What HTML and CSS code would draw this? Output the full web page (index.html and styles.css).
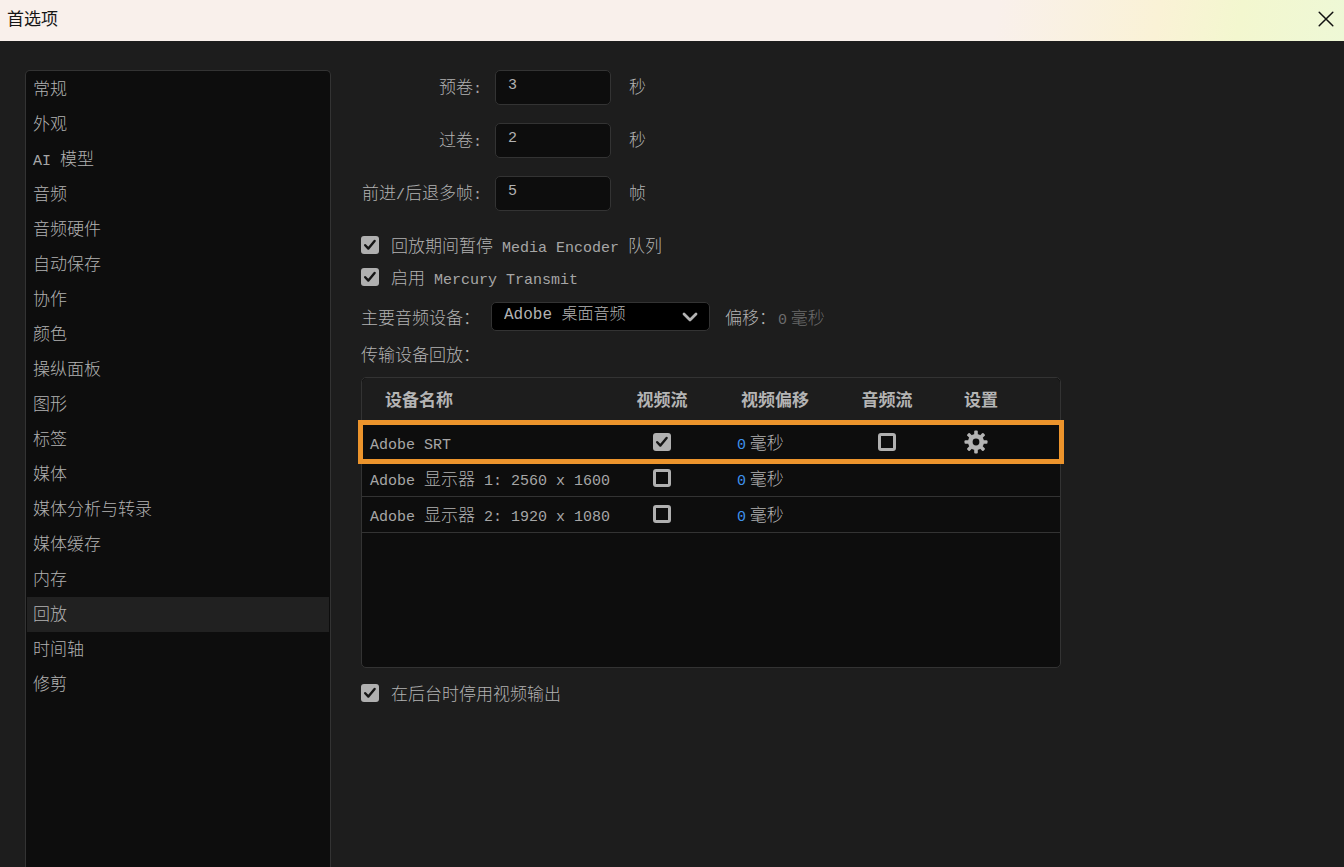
FILE: index.html
```html
<!DOCTYPE html>
<html lang="zh-CN">
<head>
<meta charset="utf-8">
<meta name="viewport" content="width=device-width, initial-scale=1">
<title>首选项</title>
<link rel="stylesheet" href="styles.css">
</head>
<body>
<header class="titlebar">
  <h1 class="title">首选项</h1>
  <button class="close" type="button" aria-label="关闭">
    <svg width="16" height="16" viewBox="0 0 16 16" fill="none" stroke="#111" stroke-width="1.5" stroke-linecap="round"><path d="M1.2 1.2 14.8 14.8M14.8 1.2 1.2 14.8"/></svg>
  </button>
</header>
<div class="layout">
  <nav class="sidebar">
    <button type="button" class="nav-item">常规</button>
    <button type="button" class="nav-item">外观</button>
    <button type="button" class="nav-item"><span class="latin">AI </span>模型</button>
    <button type="button" class="nav-item">音频</button>
    <button type="button" class="nav-item">音频硬件</button>
    <button type="button" class="nav-item">自动保存</button>
    <button type="button" class="nav-item">协作</button>
    <button type="button" class="nav-item">颜色</button>
    <button type="button" class="nav-item">操纵面板</button>
    <button type="button" class="nav-item">图形</button>
    <button type="button" class="nav-item">标签</button>
    <button type="button" class="nav-item">媒体</button>
    <button type="button" class="nav-item">媒体分析与转录</button>
    <button type="button" class="nav-item">媒体缓存</button>
    <button type="button" class="nav-item">内存</button>
    <button type="button" class="nav-item active" aria-current="page">回放</button>
    <button type="button" class="nav-item">时间轴</button>
    <button type="button" class="nav-item">修剪</button>
  </nav>
  <main class="panel">
    <div class="fields">
      <label for="preroll">预卷<span class="latin">:</span></label><input class="number" id="preroll" type="text" value="3"><span class="unit">秒</span>
      <label for="postroll">过卷<span class="latin">:</span></label><input class="number" id="postroll" type="text" value="2"><span class="unit">秒</span>
      <label for="step">前进<span class="latin">/</span>后退多帧<span class="latin">:</span></label><input class="number" id="step" type="text" value="5"><span class="unit">帧</span>
    </div>
    <div class="checks">
      <label class="check-row"><input class="check" type="checkbox" checked><span>回放期间暂停<span class="latin"> Media Encoder </span>队列</span></label>
      <label class="check-row"><input class="check" type="checkbox" checked><span>启用<span class="latin"> Mercury Transmit</span></span></label>
    </div>
    <div class="device">
      <label class="device-label" for="audio">主要音频设备：</label>
      <div class="select-wrap">
        <select id="audio" class="select"><option>Adobe 桌面音频</option></select>
        <svg class="chevron" width="16" height="10" viewBox="0 0 16 10" fill="none" stroke="#b4b4b4" stroke-width="2.8" stroke-linecap="round" stroke-linejoin="round"><path d="M2 2 8 8 14 2"/></svg>
      </div>
      <span class="offset-label">偏移：</span>
      <span class="muted"><span class="latin">0</span> 毫秒</span>
    </div>
    <h2 class="caption" id="transmit">传输设备回放：</h2>
    <div class="table-box">
      <table class="devices" aria-labelledby="transmit">
        <colgroup><col class="c-name"><col class="c-video"><col class="c-offset"><col class="c-audio"><col></colgroup>
        <thead>
          <tr><th class="name">设备名称</th><th>视频流</th><th>视频偏移</th><th>音频流</th><th class="settings">设置</th></tr>
        </thead>
        <tbody>
          <tr class="highlight">
            <td class="name"><span class="latin">Adobe SRT</span></td>
            <td><input class="check" type="checkbox" checked aria-label="视频流"></td>
            <td class="offset"><button class="value" type="button">0</button> 毫秒</td>
            <td><input class="check" type="checkbox" aria-label="音频流"></td>
            <td class="settings"><button class="gear" type="button" aria-label="设置"><svg width="24" height="24" viewBox="-12 -12 24 24"><g fill="#b4b4b4"><g id="teeth"><rect x="-1.8" y="-11.5" width="3.6" height="23" rx="1"/><rect x="-11.5" y="-1.8" width="23" height="3.6" rx="1"/></g><use href="#teeth" transform="rotate(45)"/><circle r="8"/></g><circle r="3.4" fill="#0d0d0d"/></svg></button></td>
          </tr>
          <tr>
            <td class="name"><span class="latin">Adobe </span>显示器<span class="latin"> 1: 2560 x 1600</span></td>
            <td><input class="check" type="checkbox" aria-label="视频流"></td>
            <td class="offset"><button class="value" type="button">0</button> 毫秒</td>
            <td></td><td></td>
          </tr>
          <tr>
            <td class="name"><span class="latin">Adobe </span>显示器<span class="latin"> 2: 1920 x 1080</span></td>
            <td><input class="check" type="checkbox" aria-label="视频流"></td>
            <td class="offset"><button class="value" type="button">0</button> 毫秒</td>
            <td></td><td></td>
          </tr>
        </tbody>
      </table>
    </div>
    <label class="check-row"><input class="check" type="checkbox" checked><span>在后台时停用视频输出</span></label>
  </main>
</div>
</body>
</html>
```
FILE: styles.css
```css
* { box-sizing: border-box; }

body {
  margin: 0;
  min-height: 100vh;
  display: flex;
  flex-direction: column;
  background: #1d1d1d;
  color: #b2b2b2;
  font: 300 17px/24px "Noto Sans CJK SC", sans-serif;
}

button, input, select { font: inherit; color: inherit; }
button { border: 0; padding: 0; background: none; }

.latin { font: 15px/1 "Liberation Mono", monospace; white-space: pre; color: #a6a6a6; }

.titlebar {
  height: 41px;
  padding: 0 10px 3px 7px;
  display: flex;
  align-items: center;
  justify-content: space-between;
  background: linear-gradient(100deg, #f9f0eb 74%, #faf2d6 86%, #f3f7cf 92%, #eef8d6);
  color: #161616;
}
.title { margin: 0; padding-bottom: 2px; font-size: 17px; font-weight: 400; }
.close { display: flex; }

.layout {
  flex: 1;
  display: flex;
  gap: 30px;
  padding: 29px 25px 0;
}

.sidebar {
  flex: 0 0 306px;
  display: flex;
  flex-direction: column;
  padding: 1px;
  border: 1px solid #333;
  border-bottom: 0;
  border-radius: 5px 5px 0 0;
  background: #0d0d0d;
}
.nav-item { height: 35px; padding: 0 0 3px 6px; text-align: left; }
.nav-item.active { background: #212121; }

.panel { flex: 1; min-width: 0; }

.fields {
  display: grid;
  grid-template-columns: 121px 116px auto;
  gap: 18px 13px;
  align-items: center;
}
.fields label { padding-bottom: 3px; text-align: right; white-space: nowrap; }
.unit { padding: 0 0 3px 5px; }
.number {
  width: 100%;
  height: 35px;
  padding: 0 12px 4px;
  border: 1px solid #333;
  border-radius: 5px;
  background: #0d0d0d;
  font: 15px "Liberation Mono", monospace;
}

.checks { display: grid; gap: 8px; margin: 22px 0 13px; }
.check-row { display: flex; align-items: center; gap: 12px; }
.check {
  appearance: none;
  display: block;
  width: 18px;
  height: 18px;
  margin: 0;
  border: 3px solid #b0b0b0;
  border-radius: 3px;
}
.check:checked {
  border: 0;
  background: #b0b0b0 url("data:image/svg+xml,%3Csvg xmlns='http://www.w3.org/2000/svg' viewBox='0 0 18 18'%3E%3Cpath d='M4.2 9.2 7.4 12.6 13.6 5' fill='none' stroke='%23151515' stroke-width='2.4' stroke-linecap='round' stroke-linejoin='round'/%3E%3C/svg%3E");
}

.device { display: flex; align-items: center; }
.device-label { width: 130px; white-space: nowrap; }
.select-wrap { position: relative; width: 219px; }
.select {
  display: block;
  appearance: none;
  width: 100%;
  height: 29px;
  padding: 0 32px 4px 12px;
  border: 1px solid #333;
  border-radius: 5px;
  background: #000;
  font: 300 16px "Liberation Mono", "Noto Sans CJK SC", monospace;
}
.chevron { position: absolute; right: 12px; top: 10px; pointer-events: none; }
.offset-label { padding-left: 15px; }
.muted, .muted .latin { color: #6c6c6c; }
.muted { padding-left: 2px; }

.caption { margin: 11px 0; font-size: 17px; font-weight: 300; }

.table-box {
  max-width: 700px;
  min-height: 291px;
  margin-bottom: 13px;
  border: 1px solid #333;
  border-radius: 5px;
  background: #0d0d0d;
}
.devices { width: 100%; table-layout: fixed; border-collapse: collapse; }
.c-name { width: 250px; }
.c-video { width: 100px; }
.c-offset { width: 126px; }
.c-audio { width: 98px; }
.devices th {
  height: 46px;
  padding: 0 0 4px;
  background: #1d1d1d;
  color: #b4b4b4;
  font-weight: 700;
}
.devices th:first-child { border-top-left-radius: 5px; }
.devices th:last-child { border-top-right-radius: 5px; }
.devices td {
  height: 36px;
  padding: 0;
  border-bottom: 1px solid #333;
  text-align: center;
  white-space: nowrap;
}
.devices .check { margin: 0 auto; }
.devices .name { text-align: left; padding-left: 8px; }
.devices th.name { padding-left: 23px; }
.devices .offset { text-align: left; padding-left: 25px; }
.devices .settings { text-align: left; padding-left: 28px; }
.highlight { outline: 5px solid #ec942c; outline-offset: -1px; }
.value { color: #3f93ec; font: 15px/1 "Liberation Mono", monospace; }
.gear { display: flex; }
```
